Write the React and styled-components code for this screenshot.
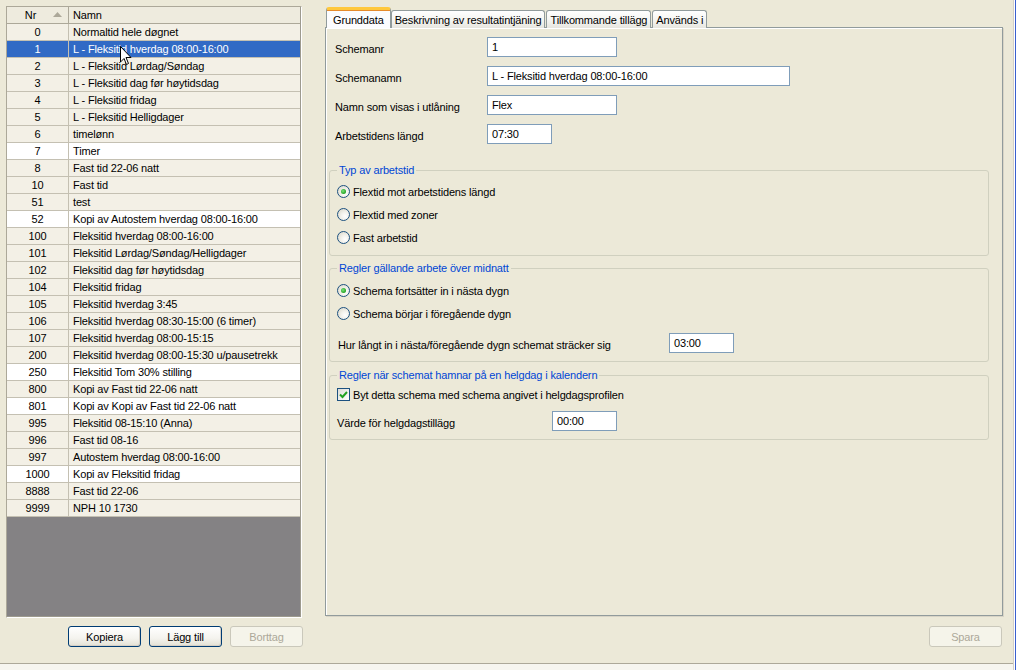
import React from 'react';
import styled, { createGlobalStyle } from 'styled-components';

const GlobalStyle = createGlobalStyle`
  html, body {
    margin: 0;
    padding: 0;
    background: #ECE9D8;
  }
  body {
    font-family: "Liberation Sans", Arial, sans-serif;
    font-size: 11px;
    letter-spacing: -0.15px;
    color: #000;
  }
`;

const Window = styled.div`
  width: 1016px;
  height: 670px;
  display: flex;
  background: #ECE9D8;
  overflow: hidden;
`;

const Body = styled.div`
  width: 1013px;
  display: flex;
  flex-direction: column;
  border-right: 1px solid #D4D0C8;
`;

const Edge = styled.div`
  flex: 1;
  border-left: 1px solid #fff;
  background: #3A5FCD;
`;

const Main = styled.div`
  height: 664px;
  box-sizing: border-box;
  display: flex;
  gap: 23px;
  padding: 6px 0 0 6px;
  border-bottom: 1px solid #ACA899;
`;

const Footer = styled.div`
  flex: 1;
  background: #F6F5EF;
`;

/* ---------- left list ---------- */

const LeftColumn = styled.div`
  width: 296px;
  display: flex;
  flex-direction: column;
`;

const ListBox = styled.div`
  position: relative;
  height: 612px;
  box-sizing: border-box;
  border: 1px solid;
  border-color: #ACA899 #fff #fff #ACA899;
  display: flex;
  flex-direction: column;
  background: #848284;
`;

const ListInner = styled.div`
  flex: 1;
  display: flex;
  flex-direction: column;
  border-right: 1px solid #9D9A8E;
  border-bottom: 1px solid #9D9A8E;
  background: #848284;
`;

const HeaderRow = styled.div`
  display: flex;
  height: 17px;
  box-sizing: border-box;
  background: #EEEBDE;
  border-bottom: 1px solid #ACA899;
`;

const HeaderCell = styled.div`
  position: relative;
  display: flex;
  align-items: center;
  justify-content: ${p => (p.$center ? 'center' : 'flex-start')};
  width: ${p => (p.$w ? `${p.$w}px` : 'auto')};
  flex: ${p => (p.$w ? 'none' : '1')};
  box-sizing: border-box;
  padding-left: ${p => (p.$center ? '0' : '4px')};
  border-right: ${p => (p.$w ? '1px solid #ACA899' : 'none')};
`;

const SortArrow = styled.svg`
  position: absolute;
  right: 6px;
  top: 5px;
`;

const Row = styled.div`
  display: flex;
  height: 17px;
  box-sizing: border-box;
  border-bottom: 1px solid #C4C0B2;
  background: ${p => (p.$selected ? '#316AC5' : p.$white ? '#FFFFFF' : '#F3F0E6')};
  color: ${p => (p.$selected ? '#fff' : '#000')};
`;

const NrCell = styled.div`
  width: 62px;
  flex: none;
  box-sizing: border-box;
  border-right: 1px solid #C4C0B2;
  display: flex;
  align-items: center;
  justify-content: center;
`;

const NameCell = styled.div`
  flex: 1;
  display: flex;
  align-items: center;
  padding-left: 4px;
  white-space: nowrap;
  overflow: hidden;
`;

const Cursor = styled.svg`
  position: absolute;
  left: 113px;
  top: 39px;
`;

const ButtonRow = styled.div`
  display: flex;
  justify-content: flex-end;
  gap: 8px;
  margin-top: 8px;
  margin-right: -1px;
`;

const Button = styled.button`
  width: 73px;
  height: 21px;
  box-sizing: border-box;
  font-family: inherit;
  font-size: 11px;
  letter-spacing: inherit;
  padding: 0;
  border-radius: 3px;
  border: 1px solid ${p => (p.disabled ? '#CAC8BB' : '#003C74')};
  color: ${p => (p.disabled ? '#ACA899' : '#000')};
  background: ${p =>
    p.disabled
      ? '#F5F4EA'
      : 'linear-gradient(#FFFFFF 0%, #F4F3EE 60%, #E3E1D5 100%)'};
  box-shadow: ${p => (p.disabled ? 'none' : 'inset -1px -1px 0 #D6D0C5')};
`;

/* ---------- right side ---------- */

const RightColumn = styled.div`
  width: 678px;
  display: flex;
  flex-direction: column;
  padding-top: 1px;
`;

const TabStrip = styled.div`
  display: flex;
  align-items: flex-end;
  height: 21px;
  margin-left: 1px;
  margin-bottom: -1px;
  position: relative;
  z-index: 1;
`;

const Tab = styled.div`
  height: ${p => (p.$active ? '21px' : '18px')};
  box-sizing: border-box;
  display: flex;
  align-items: center;
  padding: ${p => (p.$active ? '1px 6px 0 6px' : '1px 3px 0 3px')};
  margin-right: ${p => (p.$active ? '0' : '1px')};
  border: 1px solid #919B9C;
  border-bottom: none;
  border-top: ${p => (p.$active ? '3px solid #FFC83C' : '1px solid #919B9C')};
  border-radius: 3px 3px 0 0;
  background: ${p =>
    p.$active ? '#FCFCFE' : 'linear-gradient(#FFFFFF, #F3F3EF 60%, #E7E6DF)'};
  box-shadow: ${p => (p.$active ? 'inset 0 1px 0 #E68B2C' : 'none')};
  white-space: nowrap;
`;

const Panel = styled.div`
  height: 589px;
  box-sizing: border-box;
  border: 1px solid #919B9C;
  box-shadow: inset 1px 1px 0 #fff, 1px 1px 0 #D8D4C6;
  background: #ECE9D8;
  padding: 9px 0 0 9px;
  display: flex;
  flex-direction: column;
`;

const FieldGrid = styled.div`
  display: grid;
  grid-template-columns: 152px auto;
  row-gap: 9px;
  align-items: center;
`;

const Label = styled.div`
  padding-top: 3px;
  white-space: nowrap;
`;

const Input = styled.div`
  width: ${p => p.$w}px;
  height: 20px;
  box-sizing: border-box;
  border: 1px solid #7F9DB9;
  background: #fff;
  padding: 2px 0 0 4px;
  font-size: 11px;
  line-height: 15px;
  white-space: nowrap;
`;

const Group = styled.fieldset`
  margin: ${p => p.$mt}px 13px 0 -6px;
  padding: ${p => `${p.$pt}px 0 ${p.$pb}px 7px`};
  border: 1px solid #D0D0BF;
  border-radius: 3px;
  min-width: 0;
`;

const Legend = styled.legend`
  color: #0046D5;
  padding: 0 2px;
  line-height: 13px;
`;

const OptionRow = styled.div`
  height: 23px;
  display: flex;
  align-items: center;
  gap: 3px;
`;

const RadioCircle = styled.span`
  width: 13px;
  height: 13px;
  box-sizing: border-box;
  border-radius: 50%;
  border: 1px solid #1C5180;
  background: radial-gradient(circle at 65% 65%, #FFFFFF 0%, #F2F1EB 40%, #D6D3C4 100%);
  display: flex;
  align-items: center;
  justify-content: center;

  &::after {
    content: '';
    display: ${p => (p.$checked ? 'block' : 'none')};
    width: 5px;
    height: 5px;
    border-radius: 50%;
    background: radial-gradient(circle at 40% 40%, #7BE37B, #21A121 70%);
  }
`;

const CheckBox = styled.span`
  width: 13px;
  height: 13px;
  box-sizing: border-box;
  border: 1px solid #1C5180;
  background: linear-gradient(135deg, #DCDCD7, #FFFFFF);
  display: flex;
  align-items: center;
  justify-content: center;
`;

const InlineField = styled.div`
  display: flex;
  align-items: center;
  margin-top: ${p => p.$mt}px;
  padding-left: ${p => p.$pl || 0}px;
`;

const InlineLabel = styled.div`
  width: ${p => p.$w}px;
  padding-top: 3px;
  white-space: nowrap;
`;

const SaveRow = styled.div`
  display: flex;
  justify-content: flex-end;
  margin-top: 10px;
  margin-right: 1px;
`;

const rows = [
  ['0', 'Normaltid hele døgnet'],
  ['1', 'L - Fleksitid hverdag 08:00-16:00'],
  ['2', 'L - Fleksitid Lørdag/Søndag'],
  ['3', 'L - Fleksitid dag før høytidsdag'],
  ['4', 'L - Fleksitid fridag'],
  ['5', 'L - Fleksitid Helligdager'],
  ['6', 'timelønn'],
  ['7', 'Timer', true],
  ['8', 'Fast tid 22-06 natt'],
  ['10', 'Fast tid'],
  ['51', 'test'],
  ['52', 'Kopi av Autostem hverdag 08:00-16:00', true],
  ['100', 'Fleksitid hverdag 08:00-16:00'],
  ['101', 'Fleksitid Lørdag/Søndag/Helligdager'],
  ['102', 'Fleksitid dag før høytidsdag'],
  ['104', 'Fleksitid fridag'],
  ['105', 'Fleksitid hverdag 3:45'],
  ['106', 'Fleksitid hverdag 08:30-15:00 (6 timer)'],
  ['107', 'Fleksitid hverdag 08:00-15:15'],
  ['200', 'Fleksitid hverdag 08:00-15:30 u/pausetrekk'],
  ['250', 'Fleksitid Tom 30% stilling', true],
  ['800', 'Kopi av Fast tid 22-06 natt'],
  ['801', 'Kopi av Kopi av Fast tid 22-06 natt', true],
  ['995', 'Fleksitid 08-15:10 (Anna)'],
  ['996', 'Fast tid 08-16'],
  ['997', 'Autostem hverdag 08:00-16:00'],
  ['1000', 'Kopi av Fleksitid fridag', true],
  ['8888', 'Fast tid 22-06'],
  ['9999', 'NPH 10 1730'],
];

const tabs = ['Grunddata', 'Beskrivning av resultatintjäning', 'Tillkommande tillägg', 'Används i'];

const Radio = ({ checked, children }) => (
  <OptionRow>
    <RadioCircle $checked={checked} />
    <span>{children}</span>
  </OptionRow>
);

export default function App() {
  return (
    <>
      <GlobalStyle />
      <Window>
        <Body>
          <Main>
            <LeftColumn>
              <ListBox>
                <ListInner>
                  <HeaderRow>
                    <HeaderCell $w={62} $center>
                      <span style={{ marginRight: 14 }}>Nr</span>
                      <SortArrow width="9" height="6" viewBox="0 0 9 6">
                        <polygon points="4.5,0 9,5 0,5" fill="#ACA899" />
                      </SortArrow>
                    </HeaderCell>
                    <HeaderCell>Namn</HeaderCell>
                  </HeaderRow>
                  {rows.map(([nr, name, white], i) => (
                    <Row key={nr} $white={white} $selected={i === 1}>
                      <NrCell>{nr}</NrCell>
                      <NameCell>{name}</NameCell>
                    </Row>
                  ))}
                </ListInner>
                <Cursor width="12" height="20" viewBox="0 0 12 20">
                  <path
                    d="M0.5 0.5 L0.5 16 L4 12.5 L6.5 18.5 L8.5 17.5 L6 11.5 L11 11.5 Z"
                    fill="#fff"
                    stroke="#000"
                    strokeWidth="1"
                  />
                </Cursor>
              </ListBox>
              <ButtonRow>
                <Button>Kopiera</Button>
                <Button>Lägg till</Button>
                <Button disabled>Borttag</Button>
              </ButtonRow>
            </LeftColumn>

            <RightColumn>
              <TabStrip>
                {tabs.map((t, i) => (
                  <Tab key={t} $active={i === 0}>{t}</Tab>
                ))}
              </TabStrip>
              <Panel>
                <FieldGrid>
                  <Label>Schemanr</Label>
                  <Input $w={130}>1</Input>
                  <Label>Schemanamn</Label>
                  <Input $w={303}>L - Fleksitid hverdag 08:00-16:00</Input>
                  <Label>Namn som visas i utlåning</Label>
                  <Input $w={130}>Flex</Input>
                  <Label>Arbetstidens längd</Label>
                  <Input $w={65}>07:30</Input>
                </FieldGrid>

                <Group $mt={20} $pt={3} $pb={6}>
                  <Legend>Typ av arbetstid</Legend>
                  <Radio checked>Flextid mot arbetstidens längd</Radio>
                  <Radio>Flextid med zoner</Radio>
                  <Radio>Fast arbetstid</Radio>
                </Group>

                <Group $mt={6} $pt={4} $pb={8}>
                  <Legend>Regler gällande arbete över midnatt</Legend>
                  <Radio checked>Schema fortsätter in i nästa dygn</Radio>
                  <Radio>Schema börjar i föregående dygn</Radio>
                  <InlineField $mt={8} $pl={1}>
                    <InlineLabel $w={331}>Hur långt in i nästa/föregående dygn schemat sträcker sig</InlineLabel>
                    <Input $w={65}>03:00</Input>
                  </InlineField>
                </Group>

                <Group $mt={7} $pt={1} $pb={8}>
                  <Legend>Regler när schemat hamnar på en helgdag i kalendern</Legend>
                  <OptionRow>
                    <CheckBox>
                      <svg width="9" height="8" viewBox="0 0 9 8">
                        <path d="M1 3.5 L3.5 6 L8 1" fill="none" stroke="#21A121" strokeWidth="2" />
                      </svg>
                    </CheckBox>
                    <span>Byt detta schema med schema angivet i helgdagsprofilen</span>
                  </OptionRow>
                  <InlineField $mt={5}>
                    <InlineLabel $w={215}>Värde för helgdagstillägg</InlineLabel>
                    <Input $w={65}>00:00</Input>
                  </InlineField>
                </Group>
              </Panel>
              <SaveRow>
                <Button disabled>Spara</Button>
              </SaveRow>
            </RightColumn>
          </Main>
          <Footer />
        </Body>
        <Edge />
      </Window>
    </>
  );
}
